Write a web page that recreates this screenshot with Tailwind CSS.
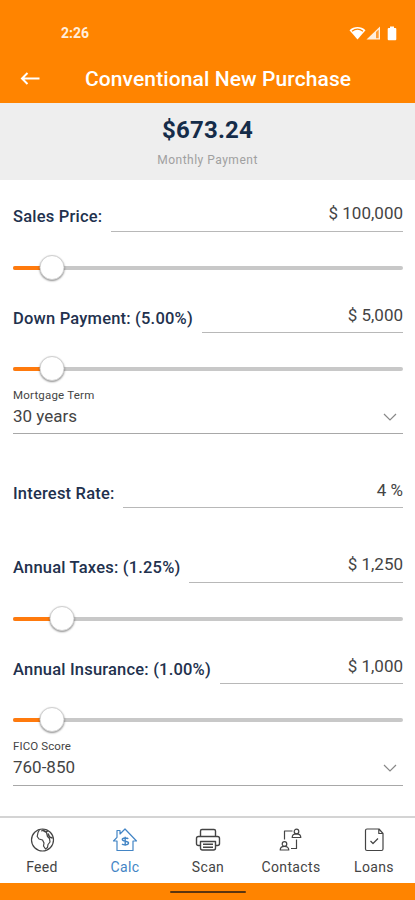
<!DOCTYPE html>
<html lang="en">
<head>
    <meta charset="UTF-8">
    <meta name="viewport" content="width=device-width, initial-scale=1.0">
    <title>Conventional New Purchase</title>
    <script src="https://cdn.jsdelivr.net/npm/@tailwindcss/browser@4"></script>
</head>

<body class="bg-white font-['Roboto',sans-serif]">
<div class="flex h-[900px] w-[415px] flex-col overflow-hidden">

    <!-- header -->
    <header class="h-[103px] bg-[#ff8400] text-white">
        <div class="flex h-[55px] items-center justify-between pt-[11px] pr-[18px] pl-[61px]">
            <span class="text-[14px] font-bold text-[#ffeedd]">2:26</span>
            <div class="flex items-center">
                <svg class="h-[14px] w-[17px]" viewBox="0 0 17 14" fill="none">
                    <path d="M.5 4.200C5-.2 12-.2 16.500 4.200L8.500 13.500Z" fill="#fff"/>
                    <path d="M3 5.200C6.300 2.800 10.700 2.800 14 5.200" stroke="#ff8400" stroke-width="1.300"/>
                </svg>
                <svg class="h-[14px] w-[15px]" viewBox="0 0 15 14">
                    <path d="M.5 13.500L14 .5V13.500Z" fill="#ffeedd"/>
                    <path d="M10 6L12.700 3.400V12.200H10Z" fill="#ff9d35"/>
                </svg>
                <svg class="ml-[6px] h-[15px] w-[10px]" viewBox="0 0 10 15">
                    <path d="M3 .5h4v1.500h1.300q1 0 1 1v10.300q0 1-1 1H1.700q-1 0-1-1V3q0-1 1-1H3Z" fill="#fff"/>
                </svg>
            </div>
        </div>
        <div class="flex h-12 items-center pl-5">
            <svg class="h-5 w-5" viewBox="0 0 20 20" fill="none" stroke="#fff" stroke-width="2">
                <path d="M19.500 9.500H2M7.500 4L2 9.500l5.500 5.500"/>
            </svg>
            <h1 class="ml-[45px] pt-[2px] text-[21px] font-medium tracking-[0.1px] whitespace-nowrap">Conventional New Purchase</h1>
        </div>
    </header>

    <!-- payment -->
    <section class="flex h-[77px] flex-col items-center bg-[#eeeeee] pt-[11px]">
        <div class="text-[24px] leading-[32px] font-bold tracking-[0.2px] text-[#152c49]">$673.24</div>
        <div class="mt-[6px] text-[12px] leading-4 tracking-[0.5px] text-[#a0a0a0]">Monthly Payment</div>
    </section>

    <!-- form -->
    <main class="flex-1 pt-[22px] pr-[12px] pl-[13px] text-[17px] text-[#444]">
        <div class="flex h-[30px] gap-[9px]">
            <label class="pt-[5px] text-[16.5px] leading-5 font-medium tracking-[0.2px] text-[#22314d]">Sales Price:</label>
            <div class="flex-1 border-b border-[#b8b8b8] pt-px text-right leading-5">$ 100,000</div>
        </div>
        <div class="relative my-[18px] flex h-[35px] items-center">
            <div class="h-[4px] w-full rounded-full bg-[#c8c8c8]"><div class="h-full rounded-full bg-[#ff7a0d]" style="width: 10%"></div></div>
            <div class="absolute size-[25px] -translate-x-1/2 rounded-full border border-[#d0d0d0] bg-white shadow-[0_1px_2px_rgba(0,0,0,0.45)]" style="left: 10%"></div>
        </div>

        <div class="flex h-[30px] gap-[9px]">
            <label class="pt-[6px] text-[16.5px] leading-5 font-medium tracking-[0.2px] text-[#22314d]">Down Payment: (5.00%)</label>
            <div class="flex-1 border-b border-[#b8b8b8] pt-[2px] text-right leading-5">$ 5,000</div>
        </div>
        <div class="relative mt-[18px] flex h-[35px] items-center">
            <div class="h-[4px] w-full rounded-full bg-[#c8c8c8]"><div class="h-full rounded-full bg-[#ff7a0d]" style="width: 10%"></div></div>
            <div class="absolute size-[25px] -translate-x-1/2 rounded-full border border-[#d0d0d0] bg-white shadow-[0_1px_2px_rgba(0,0,0,0.45)]" style="left: 10%"></div>
        </div>

        <div class="mt-[2px] h-[46px] border-b border-[#a8a8a8]">
            <div class="text-[11.5px] leading-[14px] tracking-[0.2px]">Mortgage Term</div>
            <div class="flex h-[29px] items-center justify-between pr-[6px]">
                30 years
                <svg class="h-[8px] w-[14px]" viewBox="0 0 14 8" fill="none" stroke="#888" stroke-width="1.200"><path d="M1 1l6 6 6-6"/></svg>
            </div>
        </div>

        <div class="mt-[44px] flex h-[30px] gap-[8px]">
            <label class="pt-[6px] text-[16.5px] leading-5 font-medium tracking-[0.2px] text-[#22314d]">Interest Rate:</label>
            <div class="flex-1 border-b border-[#b8b8b8] pt-[2px] text-right leading-5">4 %</div>
        </div>

        <div class="mt-[45px] flex h-[30px] gap-[8px]">
            <label class="pt-[5px] text-[16.5px] leading-5 font-medium tracking-[0.2px] text-[#22314d]">Annual Taxes: (1.25%)</label>
            <div class="flex-1 border-b border-[#b8b8b8] pt-px text-right leading-5">$ 1,250</div>
        </div>
        <div class="relative my-[18px] flex h-[35px] items-center">
            <div class="h-[4px] w-full rounded-full bg-[#c8c8c8]"><div class="h-full rounded-full bg-[#ff7a0d]" style="width: 12.5%"></div></div>
            <div class="absolute size-[25px] -translate-x-1/2 rounded-full border border-[#d0d0d0] bg-white shadow-[0_1px_2px_rgba(0,0,0,0.45)]" style="left: 12.5%"></div>
        </div>

        <div class="flex h-[30px] gap-[9px]">
            <label class="pt-[6px] text-[16.5px] leading-5 font-medium tracking-[0.2px] text-[#22314d]">Annual Insurance: (1.00%)</label>
            <div class="flex-1 border-b border-[#b8b8b8] pt-[2px] text-right leading-5">$ 1,000</div>
        </div>
        <div class="relative mt-[18px] flex h-[35px] items-center">
            <div class="h-[4px] w-full rounded-full bg-[#c8c8c8]"><div class="h-full rounded-full bg-[#ff7a0d]" style="width: 10%"></div></div>
            <div class="absolute size-[25px] -translate-x-1/2 rounded-full border border-[#d0d0d0] bg-white shadow-[0_1px_2px_rgba(0,0,0,0.45)]" style="left: 10%"></div>
        </div>

        <div class="mt-[2px] h-[47px] border-b border-[#a8a8a8]">
            <div class="text-[11.5px] leading-[14px] tracking-[0.1px]">FICO Score</div>
            <div class="flex h-[29px] items-center justify-between pr-[6px]">
                760-850
                <svg class="h-[8px] w-[14px]" viewBox="0 0 14 8" fill="none" stroke="#888" stroke-width="1.200"><path d="M1 1l6 6 6-6"/></svg>
            </div>
        </div>
    </main>

    <!-- tab bar -->
    <nav class="grid h-[67px] grid-cols-5 border-t-2 border-[#d4d4d4] text-[14px] text-[#444]">
        <a class="flex flex-col items-center pt-[9px]">
            <svg class="size-[26px]" viewBox="0 0 26 26" fill="none" stroke="currentColor" stroke-width="1.200" stroke-linejoin="round">
                <circle cx="13.500" cy="13" r="11"/>
                <path d="M10.500 2.500L9 5.500 8.200 9.500l1.800 2.500 3.500 1 1.500 3-.5 3 2 3 2-1.500 .5-3 2-2.500-.5-3.500-2-2-1-4-3.500-2-2 .5"/>
                <path d="M13.500 2.500l2.500 2 3-.5M19 6.500l1.500 3.500 3 1" stroke-width="1.600"/>
            </svg>
            <span class="mt-[6px] ml-px leading-4 tracking-[0.35px]">Feed</span>
        </a>
        <a class="flex flex-col items-center pt-[9px] text-[#4385c5]">
            <svg class="size-[26px]" viewBox="0 0 26 26" fill="none" stroke="currentColor" stroke-width="1.200" stroke-linejoin="round">
                <path d="M5 14H1.500L5 10.300V3.500h3V7L13 2l11.500 12H21v9.500H5Z"/>
                <path d="M16.300 11.800c-1-1-6-1.300-6 .8 0 2.300 6.200 1 6.200 3.400s-5.300 2.200-6.500 1M13.200 9.800v9" stroke-width="1.400"/>
            </svg>
            <span class="mt-[6px] ml-px leading-4 tracking-[0.35px]">Calc</span>
        </a>
        <a class="flex flex-col items-center pt-[9px]">
            <svg class="size-[26px]" viewBox="0 0 26 26" fill="none" stroke="currentColor" stroke-width="1.400" stroke-linejoin="round">
                <path d="M5.500 9.500V4q0-1.500 1.500-1.500h12q1.500 0 1.500 1.500v5.500M5.500 18.500H3.500q-2 0-2-2v-5q0-2 2-2h19q2 0 2 2v5q0 2-2 2h-2"/>
                <path d="M5.500 14.500h15v6.500q0 2-2 2h-11q-2 0-2-2ZM8 17.300h10M8 20.200h10"/>
            </svg>
            <span class="mt-[6px] ml-px leading-4 tracking-[0.35px]">Scan</span>
        </a>
        <a class="flex flex-col items-center pt-[9px]">
            <svg class="size-[26px]" viewBox="0 0 26 26" fill="none" stroke="currentColor" stroke-width="1.200" stroke-linejoin="round">
                <circle cx="18.500" cy="4.500" r="2.300"/>
                <path d="M14.200 10.500c0-2.700 2-3.700 4.300-3.700s4.300 1 4.300 3.700Z"/>
                <circle cx="6.500" cy="17" r="2.300"/>
                <path d="M2.200 23c0-2.700 2-3.700 4.300-3.700s4.300 1 4.300 3.700Z"/>
                <path d="M6.500 12.500V4H14.500M18.500 12.500v9h-5.500"/>
            </svg>
            <span class="mt-[6px] ml-px leading-4 tracking-[0.35px]">Contacts</span>
        </a>
        <a class="flex flex-col items-center pt-[9px]">
            <svg class="size-[26px]" viewBox="0 0 26 26" fill="none" stroke="currentColor" stroke-width="1.200" stroke-linejoin="round">
                <path d="M6 2h12L22 6.500V22q0 1.500-1.500 1.500H6q-1.500 0-1.500-1.500V3.500Q4.500 2 6 2ZM17.800 2v4.500H22"/>
                <path d="M9.500 14l2.500 2.500 5-5"/>
            </svg>
            <span class="mt-[6px] ml-px leading-4 tracking-[0.35px]">Loans</span>
        </a>
    </nav>
    <div class="flex h-[17px] items-center justify-center bg-[#ff8400]">
        <div class="h-[2px] w-[76px] rounded-full bg-[#5a3510]"></div>
    </div>
</div>
</body>
</html>
